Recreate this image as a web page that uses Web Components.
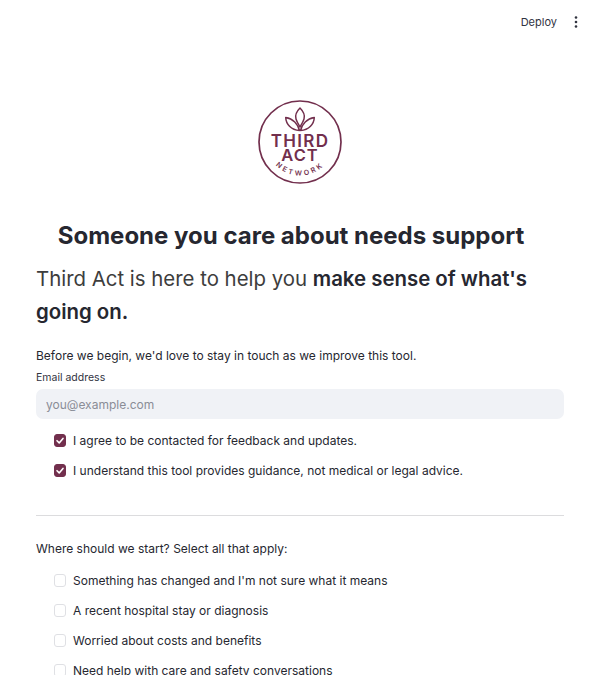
<!DOCTYPE html>
<html><head><meta charset="utf-8"><style>
html,body{margin:0;padding:0;height:675px;overflow:hidden;background:#fff}
body{font-family:Inter,sans-serif;color:#31333f}
</style></head><body>
<app-shell>
<app-header></app-header>
<tan-logo></tan-logo>
<h-title>Someone you care about needs support</h-title>
<h-sub>Third Act is here to help you <b>make sense of what's going on.</b></h-sub>
<p-text style="--mt:18px">Before we begin, we'd love to stay in touch as we improve this tool.</p-text>
<email-field label="Email address" placeholder="you@example.com"></email-field>
<check-row checked style="--mt:6px">I agree to be contacted for feedback and updates.</check-row>
<check-row checked>I understand this tool provides guidance, not medical or legal advice.</check-row>
<h-rule></h-rule>
<p-text>Where should we start? Select all that apply:</p-text>
<check-row style="--mt:6px">Something has changed and I'm not sure what it means</check-row>
<check-row>A recent hospital stay or diagnosis</check-row>
<check-row>Worried about costs and benefits</check-row>
<check-row>Need help with care and safety conversations</check-row>
</app-shell>
<script>
function def(name,css,html){
  customElements.define(name,class extends HTMLElement{
    connectedCallback(){
      if(this.shadowRoot)return;
      const r=this.attachShadow({mode:'open'});
      r.innerHTML='<style>'+css+'</style>'+(typeof html==='function'?html(this):html);
    }
  });
}
def('app-shell',':host{display:block;height:675px;overflow:hidden;padding:0 36px;box-sizing:border-box;color:#262730;font-family:Inter,sans-serif}','<slot></slot>');
def('app-header',`:host{display:flex;justify-content:flex-end;align-items:center;height:44px;margin-right:-17px;gap:14px;font-size:11px;color:#31333f}
 svg{display:block}`,`<span>Deploy</span><svg width="10" height="14" viewBox="0 0 10 14"><circle cx="5" cy="2.500" r="1.300" fill="#31333f"/><circle cx="5" cy="7" r="1.300" fill="#31333f"/><circle cx="5" cy="11.500" r="1.300" fill="#31333f"/></svg>`);
def('tan-logo',`:host{display:flex;justify-content:center;padding-top:56px;height:84px}svg{display:block}
 text{font-family:Inter,sans-serif;fill:#722f4d}`,`<svg width="86" height="84" viewBox="0 0 86 84">
 <circle cx="43" cy="42" r="41" fill="none" stroke="#722f4d" stroke-width="1.700"/>
 <g fill="none" stroke="#722f4d" stroke-width="1.500" stroke-linejoin="round">
 <path d="M43 8C39.500 11.500 37.700 15 39 19C39.800 21.800 41.500 24.500 43 27C44.500 24.500 46.200 21.800 47 19C48.300 15 46.500 11.500 43 8Z"/>
 <path d="M42.500 30.500C41 24 36 18.500 28.700 17.500C29 24 34 30 42.500 30.500Z"/>
 <path d="M43.500 30.500C45 24 50 18.500 57.300 17.500C57 24 52 30 43.500 30.500Z"/></g>
 <text x="43" y="47" text-anchor="middle" font-size="17" font-weight="600" letter-spacing="1.300">THIRD</text>
 <text x="43" y="61" text-anchor="middle" font-size="16.500" font-weight="600" letter-spacing="1">ACT</text>
 <path id="arc" d="M9.500 42 A33.500 33.500 0 0 0 76.500 42" fill="none"/>
 <text font-size="7" font-weight="600" letter-spacing="2.600"><textPath href="#arc" startOffset="50%" text-anchor="middle">NETWORK</textPath></text>
 </svg>`);
def('h-title',`:host{display:block;text-align:center;font-size:24px;line-height:34px;font-weight:700;color:#262730;margin-top:35px;padding-right:18px}`,'<slot></slot>');
def('h-sub',`:host{display:block;font-size:20.400px;line-height:33px;color:#3d3d3d;margin-top:9px;font-weight:400}
 ::slotted(b){font-weight:600;color:#262730}`,'<slot></slot>');
def('p-text',`:host{display:block;font-size:12px;line-height:20px;margin-top:var(--mt,0);color:#262730}`,'<slot></slot>');
def('email-field',`:host{display:block;margin-top:4px}
 label{display:block;font-size:10.500px;line-height:16px;color:#31333f;margin-bottom:3px}
 .i{display:block;width:100%;box-sizing:border-box;height:30px;border:0;outline:0;background:#f0f2f6;border-radius:7px;padding:0 10px;font:12px Inter,sans-serif;color:#31333f}
 .i::placeholder{color:#8a8d96;opacity:1}`,el=>`<label for="i">${el.getAttribute('label')}</label><input class="i" id="i" placeholder="${el.getAttribute('placeholder')}">`);
def('check-row',`:host{display:flex;align-items:center;height:30px;padding-left:18px;gap:7px;font-size:12px;margin-top:var(--mt,0);color:#262730;white-space:nowrap}
 .b{width:12px;height:13px;box-sizing:border-box;border-radius:3px;border:1px solid #dfe0e4;background:#fff;flex:none;display:block}
 .b.on{background:#722f4d;border-color:#722f4d}
 svg{display:block;width:10px;height:11px}`,el=>el.hasAttribute('checked')?`<span class="b on"><svg viewBox="0 0 10 11"><path d="M2 5.700 4.200 7.900 8 3.400" fill="none" stroke="#fff" stroke-width="1.600" stroke-linecap="round" stroke-linejoin="round"/></svg></span><slot></slot>`:`<span class="b"></span><slot></slot>`);
def('h-rule',`:host{display:block;height:1px;background:#dcdcde;margin:30px 0 23px}`,'');
</script>
</body></html>
